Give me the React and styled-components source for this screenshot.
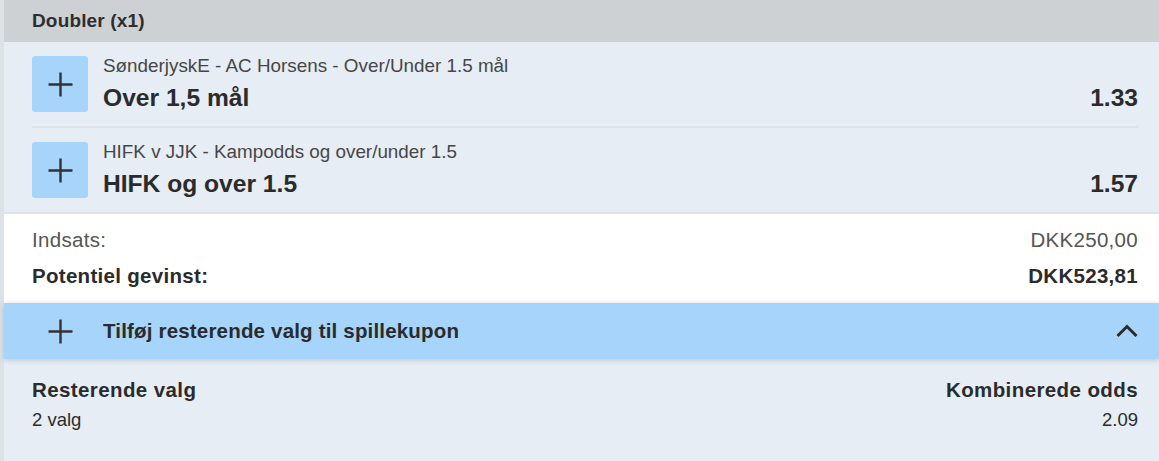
import React from "react";
import styled, { createGlobalStyle } from "styled-components";

const GlobalStyle = createGlobalStyle`
  html, body { margin: 0; padding: 0; }
  body {
    background: #dde2e6;
    font-family: "Liberation Sans", Arial, sans-serif;
    color: #2e2e2e;
  }
`;

const Slip = styled.div`
  margin-left: 4px;
  min-height: 100vh;
  display: flex;
  flex-direction: column;
`;

const Header = styled.div`
  height: 42px;
  background: #cdd1d4;
  padding: 0 21px 0 28px;
  display: flex;
  align-items: center;
  font-size: 19px;
  line-height: 22px;
  font-weight: bold;
  letter-spacing: 0.15px;
  color: #2e2e2e;
`;

const SelectionList = styled.div`
  background: #e6edf4;
  padding: 0 21px 0 28px;
`;

const SelectionRow = styled.div`
  display: flex;
  align-items: center;
  gap: 15px;
  padding: 14px 0;
  border-bottom: 2px solid #dde3e9;
  &:last-child { border-bottom: none; }
`;

const IconBox = styled.div`
  width: 56px;
  height: 56px;
  flex: none;
  border-radius: 3px;
  background: #a6d4fb;
  display: flex;
  align-items: center;
  justify-content: center;
`;

const Info = styled.div`
  flex: 1;
  display: flex;
  flex-direction: column;
`;

const Market = styled.div`
  font-size: 18.85px;
  line-height: 20px;
  color: #464646;
  margin-bottom: 8px;
`;

const PickLine = styled.div`
  display: flex;
  justify-content: space-between;
  font-size: 24.6px;
  line-height: 28px;
  font-weight: bold;
  color: #2b2b2b;
`;

const Summary = styled.div`
  background: #ffffff;
  border-top: 2px solid #dde3e9;
  padding: 15px 21px 16px 28px;
  display: flex;
  flex-direction: column;
  gap: 14px;
`;

const SummaryRow = styled.div`
  display: flex;
  justify-content: space-between;
  font-size: 20.5px;
  line-height: 22px;
  letter-spacing: 0.3px;
  font-weight: ${(p) => (p.$strong ? "bold" : "normal")};
  color: ${(p) => (p.$strong ? "#2b2b2b" : "#555555")};
`;

const Banner = styled.div`
  position: relative;
  z-index: 1;
  height: 56px;
  background: #a6d4fb;
  box-shadow: 0 1px 6px rgba(0, 0, 0, 0.18);
  display: flex;
  align-items: center;
  gap: 15px;
  padding: 0 21px 0 28px;
`;

const PlusSlot = styled.div`
  width: 56px;
  flex: none;
  display: flex;
  justify-content: center;
`;

const BannerText = styled.div`
  flex: 1;
  font-size: 20.5px;
  line-height: 22px;
  letter-spacing: 0.18px;
  font-weight: bold;
  color: #2b2b2b;
`;

const Remaining = styled.div`
  flex: 1;
  background: #e6edf4;
  padding: 20px 21px 0 28px;
  display: flex;
  justify-content: space-between;
`;

const Stat = styled.div`
  display: flex;
  flex-direction: column;
  gap: 8px;
  text-align: ${(p) => (p.$right ? "right" : "left")};
`;

const StatLabel = styled.div`
  font-size: 20.5px;
  line-height: 22px;
  letter-spacing: 0.4px;
  font-weight: bold;
  color: #2b2b2b;
`;

const StatValue = styled.div`
  font-size: 18.5px;
  line-height: 22px;
  color: #2b2b2b;
`;

const Plus = () => (
  <svg width="25" height="25" viewBox="0 0 25 25">
    <path d="M12.5 0.5V24.5M0.5 12.5H24.5" stroke="#333" strokeWidth="2.4" fill="none" />
  </svg>
);

const ChevronUp = () => (
  <svg width="22" height="14" viewBox="0 0 22 14">
    <polyline points="1.5,12 11,2.5 20.5,12" stroke="#2b2b2b" strokeWidth="3" fill="none" />
  </svg>
);

const selections = [
  { market: "SønderjyskE - AC Horsens - Over/Under 1.5 mål", pick: "Over 1,5 mål", odds: "1.33" },
  { market: "HIFK v JJK - Kampodds og over/under 1.5", pick: "HIFK og over 1.5", odds: "1.57" },
];

export default function App() {
  return (
    <>
      <GlobalStyle />
      <Slip>
        <Header>Doubler (x1)</Header>
        <SelectionList>
          {selections.map((s) => (
            <SelectionRow key={s.pick}>
              <IconBox>
                <Plus />
              </IconBox>
              <Info>
                <Market>{s.market}</Market>
                <PickLine>
                  <span>{s.pick}</span>
                  <span>{s.odds}</span>
                </PickLine>
              </Info>
            </SelectionRow>
          ))}
        </SelectionList>
        <Summary>
          <SummaryRow>
            <span>Indsats:</span>
            <span>DKK250,00</span>
          </SummaryRow>
          <SummaryRow $strong>
            <span>Potentiel gevinst:</span>
            <span>DKK523,81</span>
          </SummaryRow>
        </Summary>
        <Banner>
          <PlusSlot>
            <Plus />
          </PlusSlot>
          <BannerText>Tilføj resterende valg til spillekupon</BannerText>
          <ChevronUp />
        </Banner>
        <Remaining>
          <Stat>
            <StatLabel>Resterende valg</StatLabel>
            <StatValue>2 valg</StatValue>
          </Stat>
          <Stat $right>
            <StatLabel>Kombinerede odds</StatLabel>
            <StatValue>2.09</StatValue>
          </Stat>
        </Remaining>
      </Slip>
    </>
  );
}
